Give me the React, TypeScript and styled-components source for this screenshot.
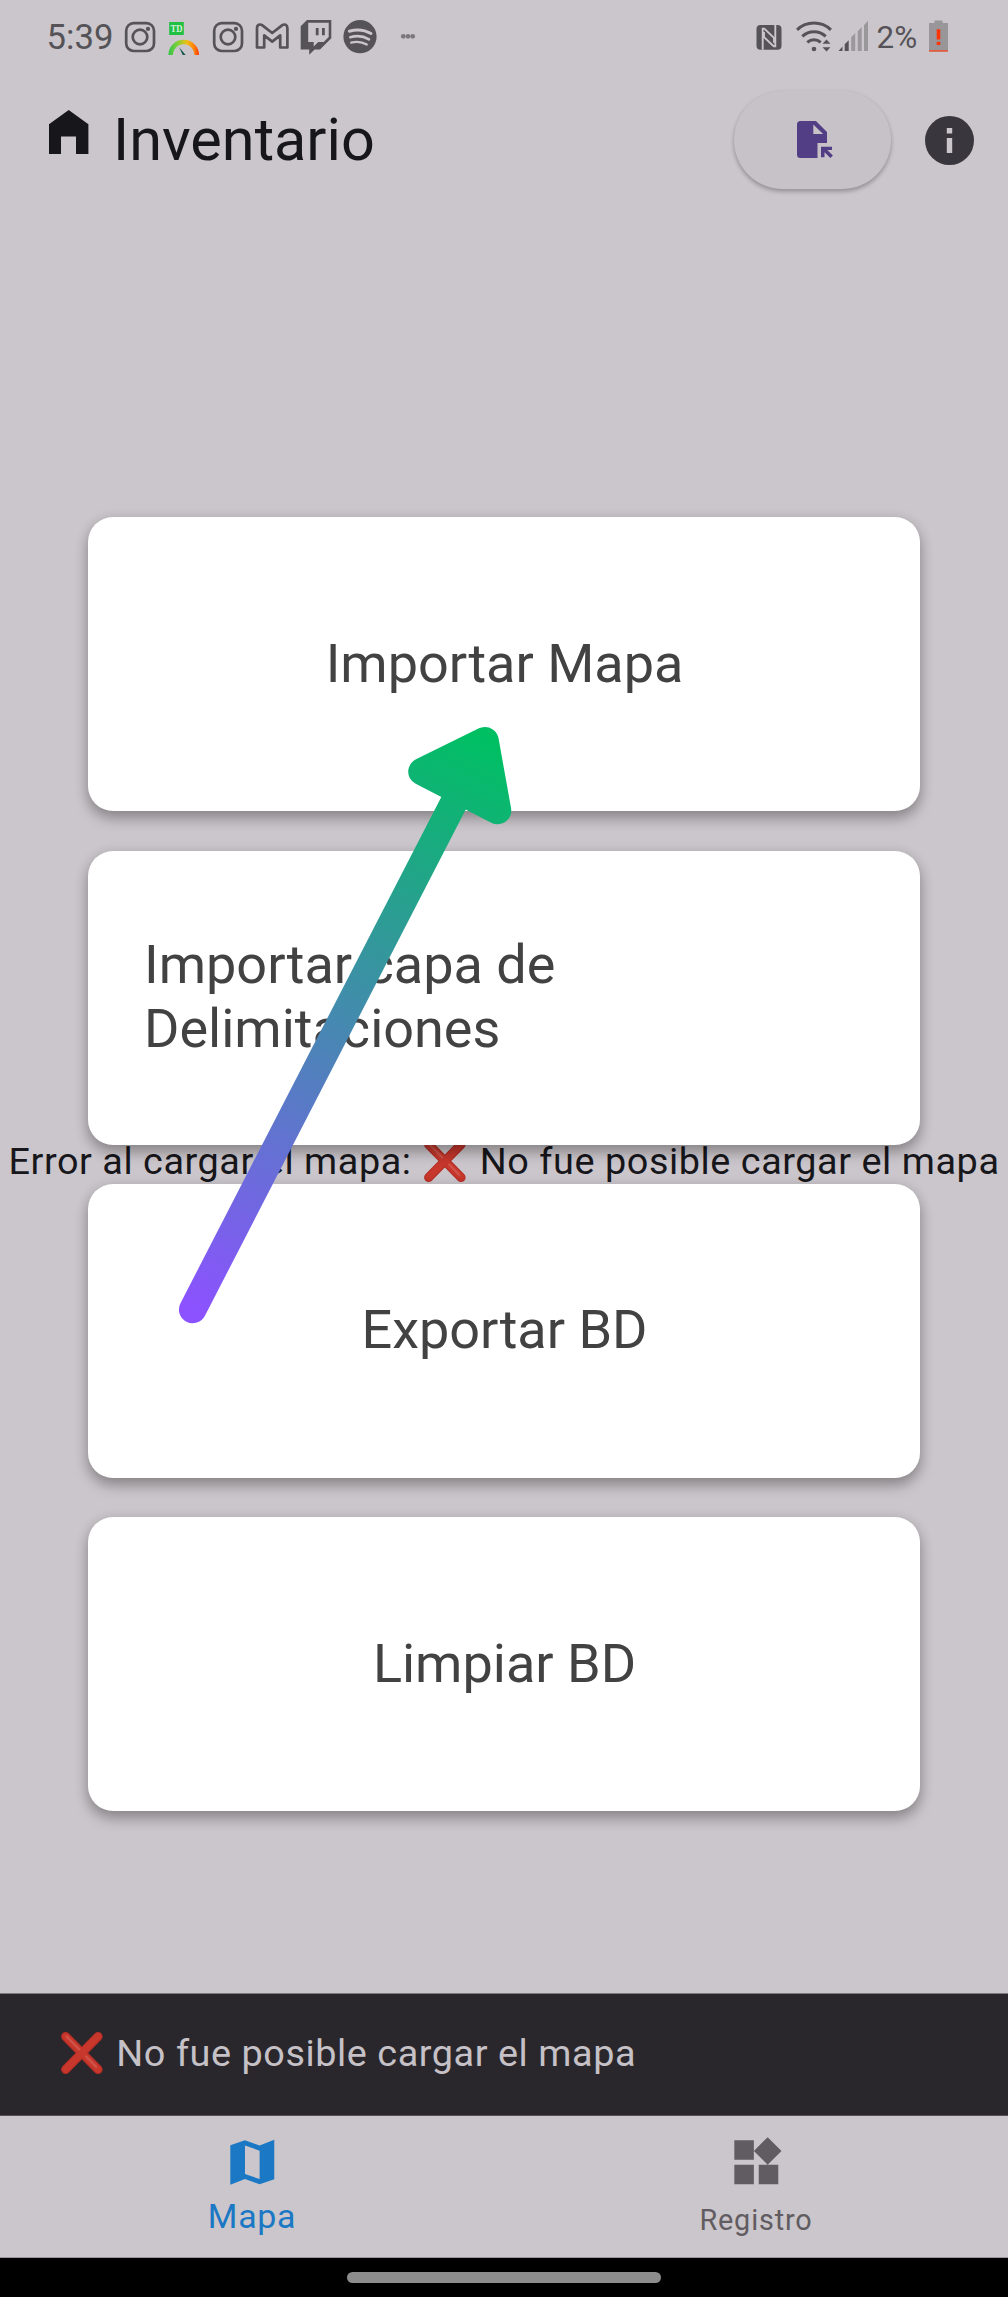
import React from "react";
import styled, { createGlobalStyle } from "styled-components";

const BG = "#cbc6cb";
const STATUS = "#555357";

const GlobalStyle = createGlobalStyle`
  * { box-sizing: border-box; }
  html, body { margin: 0; padding: 0; background: #fff; }
  body { font-family: Roboto, "Liberation Sans", sans-serif; }
  svg { display: block; flex: none; }
`;

const Screen = styled.div`
  position: relative;
  display: flex;
  flex-direction: column;
  width: 1008px;
  height: 2297px;
  background: ${BG};
  overflow: hidden;
`;

const StatusBar = styled.div`
  display: flex;
  align-items: center;
  justify-content: space-between;
  height: 74px;
  padding: 0 59px 0 46.5px;
  color: ${STATUS};
`;

const StatusGroup = styled.div`
  display: flex;
  align-items: center;
`;

const Clock = styled.span`
  width: 71px;
  font-size: 34.7px;
  line-height: 40px;
`;

const Percent = styled.span`
  width: 52.5px;
  padding-top: 1px;
  font-size: 31.4px;
  line-height: 38px;
  white-space: nowrap;
`;

const IconSlot = styled.span<{ $after: number }>`
  margin-right: ${(p) => p.$after}px;
`;

const Header = styled.header`
  display: flex;
  align-items: center;
  height: 132px;
  padding: 0 34.5px 0 48px;
`;

const HomeSlot = styled.div`
  width: 65px;
  padding-bottom: 17px;
`;

const Title = styled.h1`
  flex: 1;
  margin: 0;
  font-size: 59.4px;
  line-height: 70px;
  font-weight: 400;
  color: #17161b;
`;

const FileButton = styled.button`
  display: flex;
  align-items: center;
  justify-content: center;
  width: 157px;
  height: 98px;
  margin-right: 34px;
  padding: 0 0 0 5px;
  border: 0;
  border-radius: 49px;
  background: #c6c2c7;
  box-shadow: 0 3px 4px rgba(0, 0, 0, 0.2), 0 1px 4px rgba(0, 0, 0, 0.1);
`;

const Main = styled.main`
  position: relative;
  flex: 1;
  padding: 311.4px 88px 0;
`;

const MapError = styled.p`
  position: absolute;
  left: 0;
  right: 0;
  top: 925px;
  margin: 0;
  text-align: center;
  white-space: nowrap;
  font-size: 37.8px;
  line-height: 60px;
  letter-spacing: 0.56px;
  color: #17161b;
`;

const CardList = styled.div`
  position: relative;
  display: flex;
  flex-direction: column;
  gap: 39.33px;
`;

const Card = styled.button<{ $align?: "left" | "center" }>`
  display: flex;
  align-items: center;
  justify-content: ${(p) => (p.$align === "left" ? "flex-start" : "center")};
  height: 294px;
  padding: 0 55px 2px 56px;
  border: 0;
  border-radius: 25px;
  background: #fff;
  box-shadow: 0 8px 14px rgba(0, 0, 0, 0.26), 0 2px 13px rgba(0, 0, 0, 0.13);
  color: #424242;
  font: 400 54px/63.3px Roboto, "Liberation Sans", sans-serif;
  text-align: left;
  white-space: pre-line;
`;

const Snackbar = styled.div`
  height: 123px;
  padding: 29px 58px 0;
  border-top: 1px solid #7f7b80;
  border-bottom: 1px solid #584f57;
  background: #29272c;
  color: #c5c1c6;
  font-size: 37.8px;
  line-height: 60px;
  letter-spacing: 0.56px;
`;

const CrossSvg = styled.svg`
  display: inline-block;
  vertical-align: -8.4px;
`;

const BottomNav = styled.nav`
  display: flex;
  height: 142px;
  border-bottom: 1px solid #99959a;
`;

const NavItem = styled.a<{ $active?: boolean }>`
  flex: 1;
  display: flex;
  flex-direction: column;
  align-items: center;
  padding-top: 16.5px;
  color: ${(p) => (p.$active ? "#1a78c5" : "#615c61")};
`;

const NavLabel = styled.span<{ $active?: boolean }>`
  margin-top: ${(p) => (p.$active ? 6 : 8.5)}px;
  font-size: ${(p) => (p.$active ? 33.9 : 28.8)}px;
  line-height: 40px;
  letter-spacing: ${(p) => (p.$active ? 0.7 : 0.85)}px;
`;

const GestureBar = styled.div`
  height: 39px;
  padding-top: 14px;
  background: #000;
`;

const GesturePill = styled.div`
  width: 314px;
  height: 11px;
  margin: 0 auto;
  border-radius: 6px;
  background: #8d8d8d;
`;

const Arrow = styled.svg`
  position: absolute;
  left: 170px;
  top: 717px;
  pointer-events: none;
`;

const Cross = () => (
  <CrossSvg width="48.4" height="42" viewBox="0 0 48.4 42">
    <g strokeLinecap="round" fill="none">
      <path d="M7.6 4.5 40.1 37.5M40.1 4.5 7.6 37.5" stroke="#b52d25" strokeWidth="9" />
      <path d="M7.8 4.6 40 37.2M40 4.4 7.8 37.2" stroke="#c7372c" strokeWidth="7" />
      <path d="M8.7 4.6 21.2 17.3M28.2 24.5 38.2 34.8" stroke="#cf5248" strokeWidth="2.4" />
    </g>
  </CrossSvg>
);

const Instagram = () => (
  <svg width="44" height="44" viewBox="0 0 44 44" fill="none" stroke={STATUS} strokeWidth="2.7">
    <rect x="8.2" y="8.2" width="27.8" height="27.8" rx="7.5" />
    <circle cx="22" cy="22" r="7.3" />
    <circle cx="30" cy="13.9" r="2.1" fill={STATUS} stroke="none" />
  </svg>
);

const TdScore = () => (
  <svg width="44" height="44" viewBox="162.5 15 44 44">
    <defs>
      <linearGradient id="gauge" x1="169" x2="200" y1="0" y2="0" gradientUnits="userSpaceOnUse">
        <stop offset="0" stopColor="#35c24a" />
        <stop offset="0.28" stopColor="#7bd03a" />
        <stop offset="0.6" stopColor="#f2bd14" />
        <stop offset="0.85" stopColor="#ff7a0a" />
        <stop offset="1" stopColor="#ff2a08" />
      </linearGradient>
    </defs>
    <rect x="169.7" y="22" width="14.6" height="13" fill="#20c143" />
    <text x="171" y="32" fontFamily="Liberation Serif, serif" fontWeight="700" fontSize="10.5" textLength="12" lengthAdjust="spacingAndGlyphs" fill="#d9f0dc">TD</text>
    <path d="M171.2 55a13 13 0 0 1 26 0" fill="none" stroke="url(#gauge)" strokeWidth="4.6" />
    <path d="m179.6 47.2 6.6 7.8h-3z" fill="#17564f" />
  </svg>
);

const Gmail = () => (
  <svg width="44" height="44" viewBox="250 15 44 44" fill="none" stroke={STATUS} strokeWidth="2.7" strokeLinejoin="round">
    <path d="M257 28.2c0-3.6 3-4.6 5.4-2.8l9.8 7.6 9.8-7.6c2.4-1.8 5.4-.8 5.4 2.8v19.3h-7.2V35.4l-8 6.2-8-6.2v12.1H257z" />
  </svg>
);

const Twitch = () => (
  <svg width="44" height="44" viewBox="294 15 44 44" fill={STATUS}>
    <path d="M307 20h24.3v18.2L320 49.4h-5.4l-5.4 5.4v-5.4h-8.5V26.3z" />
    <path d="M308.2 22.7h20.5v14.2l-5 5h-5.4l-4.6 4.5v-4.5h-5.5z" fill={BG} />
    <path d="M315.8 28h2.8v7.3h-2.8zM322 28h2.8v7.3H322z" />
  </svg>
);

const Spotify = () => (
  <svg width="44" height="44" viewBox="338 15 44 44">
    <circle cx="360" cy="36.7" r="16.6" fill={STATUS} />
    <g fill="none" stroke={BG} strokeLinecap="round">
      <path d="M349.3 31.2c7.3-2.1 15.5-1.3 21.7 2.3" strokeWidth="3" />
      <path d="M350.3 37.2c6.5-1.9 13.4-1 18.7 2.1" strokeWidth="2.6" />
      <path d="M351.2 42.6c5.5-1.5 11-.8 15.6 1.9" strokeWidth="2.2" />
    </g>
  </svg>
);

const MoreDots = () => (
  <svg width="44" height="44" viewBox="382 15 44 44" fill="#7b787c">
    <circle cx="403.3" cy="36.3" r="2.4" />
    <circle cx="408" cy="36.3" r="2.4" />
    <circle cx="412.7" cy="36.3" r="2.4" />
  </svg>
);

const Nfc = () => (
  <svg width="26" height="44" viewBox="755.5 15 26 44">
    <rect x="756" y="25" width="25" height="24.7" rx="4" fill={STATUS} />
    <g fill="none" stroke={BG} strokeWidth="1.9">
      <path d="M762.2 49.700V28.600h1.600l9.700 9.200v5" />
      <path d="M774.8 25v21.300h-1.600l-9.700-9.200v-5" />
    </g>
  </svg>
);

const Wifi = () => (
  <svg width="36" height="44" viewBox="795.5 15 36 44" fill="none" stroke={STATUS} strokeWidth="3">
    <path d="M796.6 29.8a24.5 24.5 0 0 1 33.8 0" />
    <path d="M801.8 36.3a17 17 0 0 1 23.4 0" />
    <path d="M806.8 42.3a10 10 0 0 1 13.4 0" />
    <circle cx="813.5" cy="49" r="2.3" fill={STATUS} stroke="none" />
    <path d="m826 39.5 4 4.3h-8zM826 51.5l4-4.3h-8z" fill={STATUS} stroke="none" />
  </svg>
);

const Signal = () => (
  <svg width="31" height="44" viewBox="837.5 15 31 44">
    <path d="m838 51 4-4.5V51zM844.2 44.3l4-4V51h-4z" fill={STATUS} />
    <path d="m850.7 37.2 4-4.1V51h-4zM857.2 31.3l4-4.3v24h-4zM863.5 25.3l4-4.6V51h-4z" fill="#9b989c" />
  </svg>
);

const Battery = () => (
  <svg width="20" height="44" viewBox="929 15 20 44">
    <path d="M934.5 20.5h8V23h5.5v28.5h-19V23h5.5z" fill="#989698" />
    <path d="M929 50h19v1.7h-19z" fill="#e45a3c" />
    <path d="M936.7 29.3h3.6v10.2h-3.6zM936.7 41.8h3.6V45h-3.6z" fill="#ff3508" />
  </svg>
);

const cards: { label: string; align?: "left" }[] = [
  { label: "Importar Mapa" },
  { label: "Importar capa de\nDelimitaciones", align: "left" },
  { label: "Exportar BD" },
  { label: "Limpiar BD" },
];

export default function App() {
  return (
    <>
      <GlobalStyle />
      <Screen>
        <StatusBar>
          <StatusGroup>
            <Clock>5:39</Clock>
            <Instagram />
            <TdScore />
            <Instagram />
            <Gmail />
            <Twitch />
            <Spotify />
            <MoreDots />
          </StatusGroup>
          <StatusGroup>
            <IconSlot $after={14}><Nfc /></IconSlot>
            <IconSlot $after={6}><Wifi /></IconSlot>
            <IconSlot $after={8}><Signal /></IconSlot>
            <Percent>2%</Percent>
            <Battery />
          </StatusGroup>
        </StatusBar>

        <Header>
          <HomeSlot>
            <svg width="42" height="46" viewBox="0 0 42 46" fill="#17161b">
              <path d="M1 15.3 20.7 1l19.7 14.3V45H28V27.5H13V45H1z" />
            </svg>
          </HomeSlot>
          <Title>Inventario</Title>
          <FileButton aria-label="Archivo">
            <svg width="36" height="38" viewBox="797 121 36 38" fill="#523e84">
              <path d="M800.5 121H816l11 11v11h-9.5v15h-17a3.5 3.5 0 0 1-3.5-3.5v-30a3.5 3.5 0 0 1 3.5-3.5zM813.3 124.5v9.5h9.8z" />
              <path d="M821 146.7h11v3.3h-4.7l5.6 5.6-2.5 2.5-5.9-5.9v5h-3.5z" />
            </svg>
          </FileButton>
          <svg width="49" height="49" viewBox="0 0 49 49">
            <circle cx="24.5" cy="24.5" r="24.5" fill="#3a363d" />
            <path d="M21.8 12h5.4v5.6h-5.4zM21.8 22h5.4v15h-5.4z" fill={BG} />
          </svg>
        </Header>

        <Main>
          <MapError>
            Error al cargar el mapa: <Cross /> No fue posible cargar el mapa
          </MapError>
          <CardList>
            {cards.map((c) => (
              <Card key={c.label} $align={c.align}>{c.label}</Card>
            ))}
          </CardList>
        </Main>

        <Snackbar>
          <Cross /> No fue posible cargar el mapa
        </Snackbar>

        <BottomNav>
          <NavItem $active>
            <svg width="58.6" height="58.6" viewBox="0 0 24 24" fill="currentColor">
              <path d="M15 5.1 9 3 3 5.02v16.2l6-2.33 6 2.1 6-2.02V2.77L15 5.1zm0 13.79-6-2.11V5.11l6 2.11v11.67z" />
            </svg>
            <NavLabel $active>Mapa</NavLabel>
          </NavItem>
          <NavItem>
            <svg width="58.6" height="58.6" viewBox="0 0 24 24" fill="currentColor">
              <path d="M13 13v8h8v-8h-8zM3 21h8v-8H3v8zM3 3v8h8V3H3zm13.66-1.31L11 7.34 16.66 13l5.66-5.66-5.66-5.65z" />
            </svg>
            <NavLabel>Registro</NavLabel>
          </NavItem>
        </BottomNav>

        <GestureBar>
          <GesturePill />
        </GestureBar>

        <Arrow width="350" height="620" viewBox="170 717 350 620">
          <defs>
            <linearGradient id="arrow" x1="192.7" y1="1310" x2="485" y2="741" gradientUnits="userSpaceOnUse">
              <stop offset="0" stopColor="#8c52ff" />
              <stop offset="1" stopColor="#00bf63" />
            </linearGradient>
          </defs>
          <g stroke="url(#arrow)" strokeWidth="27.5" strokeLinecap="round" strokeLinejoin="round">
            <path d="M192.7 1309.5 465 781" fill="none" />
            <path d="M485 740.7 422 771.6 497.5 810.5z" fill="url(#arrow)" />
          </g>
        </Arrow>
      </Screen>
    </>
  );
}
